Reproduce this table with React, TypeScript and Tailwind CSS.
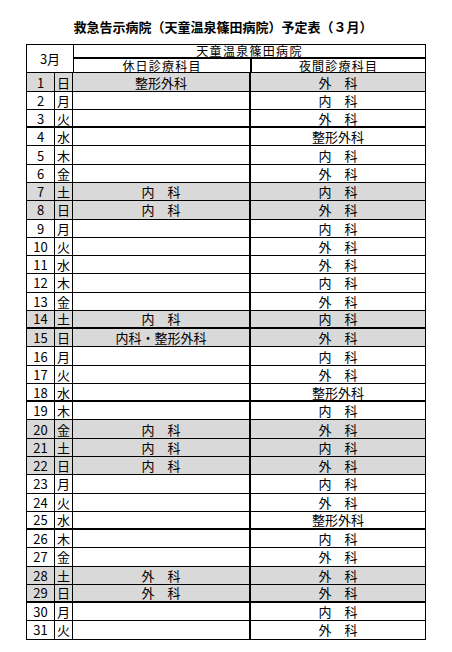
import React from 'react';

const DAYS = ['日', '月', '火', '水', '木', '金', '土'];

// 休日診療科目 (only filled on holidays)
const HOLIDAY: Record<number, string> = {
  1: '整形外科',
  7: '内　科',
  8: '内　科',
  14: '内　科',
  15: '内科・整形外科',
  20: '内　科',
  21: '内　科',
  22: '内　科',
  28: '外　科',
  29: '外　科',
};

const GREY = [1, 7, 8, 14, 15, 20, 21, 22, 28, 29];
const THICK = [3, 14, 18, 25, 29];

// 夜間診療科目: N = 内科, G = 外科, S = 整形外科
const NIGHT = 'GNGSNGNGNGGNGNGNGSNGNGNGSNGGGNG';
const NIGHT_LABEL: Record<string, string> = { N: '内　科', G: '外　科', S: '整形外科' };

export default function App() {
  const rows = Array.from({ length: 31 }, (_, i) => i + 1);

  return (
    <div className="min-h-screen bg-white text-black font-['Noto_Sans_CJK_JP','Noto_Sans_CJK_SC',sans-serif]">
      <div className="w-[400px] ml-[26px] pt-[19px]">
        <h1 className="text-center text-[13px] font-bold leading-[16px] mb-[9px] pr-[6px]">
          救急告示病院（天童温泉篠田病院）予定表（３月）
        </h1>

        <div className="border-t border-l border-r border-black text-[13px] leading-none">
          {/* header */}
          <div className="flex">
            <div className="w-[47px] h-[28.4px] border-r border-b border-black flex items-center justify-center">
              3月
            </div>
            <div className="flex-1 flex flex-col text-[12px]">
              <div className="h-[14px] border-b-2 border-black flex items-end justify-center tracking-[1.3px]">
                天童温泉篠田病院
              </div>
              <div className="h-[14.4px] flex border-b border-black">
                <div className="w-[178px] border-r-2 border-black flex items-center justify-center tracking-[1.2px]">
                  休日診療科目
                </div>
                <div className="flex-1 flex items-center justify-center tracking-[1.2px]">
                  夜間診療科目
                </div>
              </div>
            </div>
          </div>

          {/* days */}
          {rows.map((d) => (
            <div
              key={d}
              className={
                'flex h-[18.27px] border-black ' +
                (THICK.includes(d) ? 'border-b-2 ' : 'border-b ') +
                (GREY.includes(d) ? 'bg-[#d9d9d9]' : 'bg-white')
              }
            >
              <div className="w-[28px] border-r border-black flex items-center justify-center">{d}</div>
              <div className="w-[18px] border-r border-black flex items-center justify-center">
                {DAYS[(d - 1) % 7]}
              </div>
              <div className="w-[178px] border-r-2 border-black flex items-center justify-center">
                {HOLIDAY[d] ?? ''}
              </div>
              <div className="flex-1 flex items-center justify-center">{NIGHT_LABEL[NIGHT[d - 1]]}</div>
            </div>
          ))}
        </div>
      </div>
    </div>
  );
}
